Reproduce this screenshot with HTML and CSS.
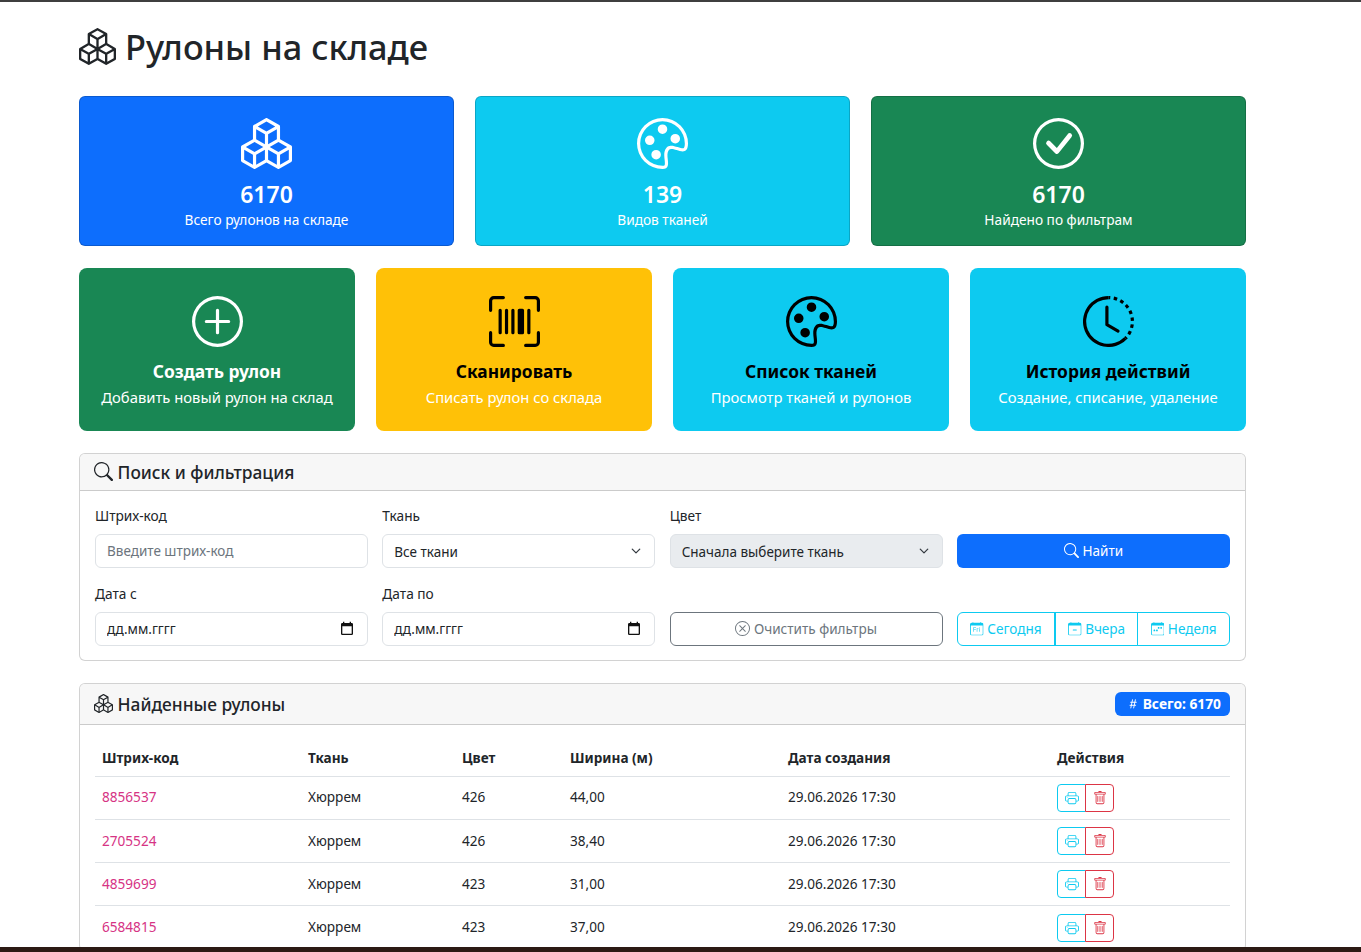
FILE: index.html
```html
<!DOCTYPE html>
<html lang="ru">
<head>
  <meta charset="UTF-8" />
  <meta name="viewport" content="width=device-width, initial-scale=1.0"/>
  <title>Рулоны на складе</title>
  <link rel="stylesheet" href="styles.css">
</head>
<body>
  <!-- icon sprite -->
  <svg class="sprite" xmlns="http://www.w3.org/2000/svg">
    <symbol id="i-boxes" viewBox="0 0 16 16"><path d="M7.752.066a.5.5 0 0 1 .496 0l3.75 2.143a.5.5 0 0 1 .252.434v3.995l3.498 2A.5.5 0 0 1 16 9.07v4.286a.5.5 0 0 1-.252.434l-3.75 2.143a.5.5 0 0 1-.496 0l-3.502-2-3.502 2.001a.5.5 0 0 1-.496 0l-3.75-2.143A.5.5 0 0 1 0 13.357V9.071a.5.5 0 0 1 .252-.434L3.75 6.638V2.643a.5.5 0 0 1 .252-.434L7.752.066ZM4.25 7.504 1.508 9.071l2.742 1.567 2.742-1.567L4.25 7.504ZM7.5 9.933l-2.75 1.571v3.134l2.75-1.571V9.933Zm1 3.134 2.75 1.571v-3.134L8.5 9.933v3.134Zm.508-3.996 2.742 1.567 2.742-1.567-2.742-1.567-2.742 1.567Zm2.242-2.433V3.504L8.5 5.076V8.21l2.75-1.572ZM7.5 8.21V5.076L4.75 3.504v3.134L7.5 8.21ZM5.258 2.643 8 4.21l2.742-1.567L8 1.076 5.258 2.643ZM15 9.933l-2.75 1.571v3.134L15 13.067V9.933ZM3.75 14.638v-3.134L1 9.933v3.134l2.75 1.571Z"/></symbol>
    <symbol id="i-palette" viewBox="0 0 16 16"><path d="M8 5a1.5 1.5 0 1 0 0-3 1.5 1.5 0 0 0 0 3zm4 3a1.5 1.5 0 1 0 0-3 1.5 1.5 0 0 0 0 3zM5.5 7a1.5 1.5 0 1 1-3 0 1.5 1.5 0 0 1 3 0zm.5 6a1.5 1.5 0 1 0 0-3 1.5 1.5 0 0 0 0 3z"/><path d="M16 8c0 3.15-1.866 2.585-3.567 2.07C11.42 9.763 10.465 9.473 10 10c-.603.683-.475 1.819-.351 2.92C9.826 14.495 9.996 16 8 16a8 8 0 1 1 8-8zm-8 7c.611 0 .654-.171.655-.176.078-.146.124-.464.07-1.119-.014-.168-.037-.37-.061-.591-.052-.464-.112-1.005-.118-1.462-.01-.707.083-1.61.704-2.314.369-.417.845-.578 1.272-.618.404-.038.812.026 1.16.104.343.077.702.186 1.025.284l.028.008c.346.105.658.199.953.266.653.148.904.083.991.024C14.717 9.38 15 9.161 15 8a7 7 0 1 0-7 7z"/></symbol>
    <symbol id="i-check" viewBox="0 0 16 16"><path d="M8 15A7 7 0 1 1 8 1a7 7 0 0 1 0 14zm0 1A8 8 0 1 0 8 0a8 8 0 0 0 0 16z"/><path d="M10.97 4.97a.235.235 0 0 0-.02.022L7.477 9.417 5.384 7.323a.75.75 0 0 0-1.06 1.06L6.97 11.03a.75.75 0 0 0 1.079-.02l3.992-4.99a.75.75 0 0 0-1.071-1.05z"/></symbol>
    <symbol id="i-plus" viewBox="0 0 16 16"><path d="M8 15A7 7 0 1 1 8 1a7 7 0 0 1 0 14zm0 1A8 8 0 1 0 8 0a8 8 0 0 0 0 16z"/><path d="M8 4a.5.5 0 0 1 .5.5v3h3a.5.5 0 0 1 0 1h-3v3a.5.5 0 0 1-1 0v-3h-3a.5.5 0 0 1 0-1h3v-3A.5.5 0 0 1 8 4z"/></symbol>
    <symbol id="i-scan" viewBox="0 0 16 16"><path d="M1.5 1a.5.5 0 0 0-.5.5v3a.5.5 0 0 1-1 0v-3A1.5 1.5 0 0 1 1.5 0h3a.5.5 0 0 1 0 1h-3zM11 .5a.5.5 0 0 1 .5-.5h3A1.5 1.5 0 0 1 16 1.5v3a.5.5 0 0 1-1 0v-3a.5.5 0 0 0-.5-.5h-3a.5.5 0 0 1-.5-.5zM.5 11a.5.5 0 0 1 .5.5v3a.5.5 0 0 0 .5.5h3a.5.5 0 0 1 0 1h-3A1.5 1.5 0 0 1 0 14.5v-3a.5.5 0 0 1 .5-.5zm15 0a.5.5 0 0 1 .5.5v3a1.5 1.5 0 0 1-1.5 1.5h-3a.5.5 0 0 1 0-1h3a.5.5 0 0 0 .5-.5v-3a.5.5 0 0 1 .5-.5zM3 4.5a.5.5 0 0 1 1 0v7a.5.5 0 0 1-1 0v-7zm2 0a.5.5 0 0 1 1 0v7a.5.5 0 0 1-1 0v-7zm2 0a.5.5 0 0 1 1 0v7a.5.5 0 0 1-1 0v-7zm2 0a.5.5 0 0 1 .5-.5h1a.5.5 0 0 1 .5.5v7a.5.5 0 0 1-.5.5h-1a.5.5 0 0 1-.5-.5v-7zm3 0a.5.5 0 0 1 1 0v7a.5.5 0 0 1-1 0v-7z"/></symbol>
    <symbol id="i-history" viewBox="0 0 16 16"><path d="M8.515 1.019A7 7 0 0 0 8 1V0a8 8 0 0 1 .589.022l-.074.997zm2.004.45a7.003 7.003 0 0 0-.985-.299l.219-.976c.383.086.76.2 1.126.342l-.36.933zm1.37.71a7.01 7.01 0 0 0-.439-.27l.493-.87a8.025 8.025 0 0 1 .979.654l-.615.789a6.996 6.996 0 0 0-.418-.302zm1.834 1.79a6.99 6.99 0 0 0-.653-.796l.724-.69c.27.285.52.59.747.91l-.818.576zm.744 1.352a7.08 7.08 0 0 0-.214-.468l.893-.45a7.976 7.976 0 0 1 .45 1.088l-.95.313a7.023 7.023 0 0 0-.179-.483zm.53 2.507a6.991 6.991 0 0 0-.1-1.025l.985-.17c.067.386.106.778.116 1.17l-1 .025zm-.131 1.538c.033-.17.06-.339.081-.51l.993.123a7.957 7.957 0 0 1-.23 1.155l-.964-.267c.046-.165.086-.332.12-.501zm-.952 2.379c.184-.29.346-.594.486-.908l.914.405c-.16.36-.345.706-.555 1.038l-.845-.535zm-.964 1.205c.122-.122.239-.248.35-.378l.758.653a8.073 8.073 0 0 1-.401.432l-.707-.707z"/><path d="M8 1a7 7 0 1 0 4.95 11.95l.707.707A8.001 8.001 0 1 1 8 0v1z"/><path d="M7.5 3a.5.5 0 0 1 .5.5v5.21l3.248 1.856a.5.5 0 0 1-.496.868l-3.5-2A.5.5 0 0 1 7 9V3.5a.5.5 0 0 1 .5-.5z"/></symbol>
    <symbol id="i-search" viewBox="0 0 16 16"><path d="M11.742 10.344a6.5 6.5 0 1 0-1.397 1.398h-.001c.03.04.062.078.098.115l3.85 3.85a1 1 0 0 0 1.415-1.414l-3.85-3.85a1.007 1.007 0 0 0-.115-.1zM12 6.5a5.5 5.5 0 1 1-11 0 5.5 5.5 0 0 1 11 0z"/></symbol>
    <symbol id="i-x" viewBox="0 0 16 16"><path d="M8 15A7 7 0 1 1 8 1a7 7 0 0 1 0 14zm0 1A8 8 0 1 0 8 0a8 8 0 0 0 0 16z"/><path d="M4.646 4.646a.5.5 0 0 1 .708 0L8 7.293l2.646-2.647a.5.5 0 0 1 .708.708L8.707 8l2.647 2.646a.5.5 0 0 1-.708.708L8 8.707l-2.646 2.647a.5.5 0 0 1-.708-.708L7.293 8 4.646 5.354a.5.5 0 0 1 0-.708z"/></symbol>
    <symbol id="i-cal-day" viewBox="0 0 16 16"><path d="M4.684 11.523v-2.3h2.261v-.61H4.684V6.801h2.464v-.61H4v5.332h.684zm3.296 0h.676V8.98c0-.554.227-1.007.953-1.007.125 0 .258.004.329.015v-.613a1.806 1.806 0 0 0-.254-.02c-.582 0-.891.32-1.012.567h-.02v-.504H7.98v4.105zm2.805-5.093c0 .238.192.425.43.425a.428.428 0 1 0 0-.855.426.426 0 0 0-.43.43zm.094 5.093h.672V7.418h-.672v4.105z"/><path d="M3.5 0a.5.5 0 0 1 .5.5V1h8V.5a.5.5 0 0 1 1 0V1h1a2 2 0 0 1 2 2v11a2 2 0 0 1-2 2H2a2 2 0 0 1-2-2V3a2 2 0 0 1 2-2h1V.5a.5.5 0 0 1 .5-.5zM1 4v10a1 1 0 0 0 1 1h12a1 1 0 0 0 1-1V4H1z"/></symbol>
    <symbol id="i-cal-minus" viewBox="0 0 16 16"><path d="M5.5 9.5A.5.5 0 0 1 6 9h4a.5.5 0 0 1 0 1H6a.5.5 0 0 1-.5-.5z"/><path d="M3.5 0a.5.5 0 0 1 .5.5V1h8V.5a.5.5 0 0 1 1 0V1h1a2 2 0 0 1 2 2v11a2 2 0 0 1-2 2H2a2 2 0 0 1-2-2V3a2 2 0 0 1 2-2h1V.5a.5.5 0 0 1 .5-.5zM1 4v10a1 1 0 0 0 1 1h12a1 1 0 0 0 1-1V4H1z"/></symbol>
    <symbol id="i-cal-week" viewBox="0 0 16 16"><path d="M11 6.5a.5.5 0 0 1 .5-.5h1a.5.5 0 0 1 .5.5v1a.5.5 0 0 1-.5.5h-1a.5.5 0 0 1-.5-.5v-1zm-3 0a.5.5 0 0 1 .5-.5h1a.5.5 0 0 1 .5.5v1a.5.5 0 0 1-.5.5h-1a.5.5 0 0 1-.5-.5v-1zm-5 3a.5.5 0 0 1 .5-.5h1a.5.5 0 0 1 .5.5v1a.5.5 0 0 1-.5.5h-1a.5.5 0 0 1-.5-.5v-1zm3 0a.5.5 0 0 1 .5-.5h1a.5.5 0 0 1 .5.5v1a.5.5 0 0 1-.5.5h-1a.5.5 0 0 1-.5-.5v-1z"/><path d="M3.5 0a.5.5 0 0 1 .5.5V1h8V.5a.5.5 0 0 1 1 0V1h1a2 2 0 0 1 2 2v11a2 2 0 0 1-2 2H2a2 2 0 0 1-2-2V3a2 2 0 0 1 2-2h1V.5a.5.5 0 0 1 .5-.5zM1 4v10a1 1 0 0 0 1 1h12a1 1 0 0 0 1-1V4H1z"/></symbol>
    <symbol id="i-hash" viewBox="0 0 16 16"><path d="M8.39 12.648a1.32 1.32 0 0 0-.015.18c0 .305.21.508.5.508.266 0 .492-.172.555-.477l.554-2.703h1.204c.421 0 .617-.234.617-.547 0-.312-.188-.53-.617-.53h-.985l.516-2.524h1.265c.43 0 .618-.227.618-.547 0-.313-.188-.524-.618-.524h-1.046l.476-2.304a1.06 1.06 0 0 0 .016-.164.51.51 0 0 0-.516-.516.54.54 0 0 0-.539.43l-.523 2.554H7.617l.477-2.304c.008-.04.015-.118.015-.164a.512.512 0 0 0-.523-.516.539.539 0 0 0-.531.43L6.53 5.484H5.414c-.43 0-.617.22-.617.532 0 .312.187.539.617.539h.906l-.515 2.523H4.609c-.421 0-.609.219-.609.531 0 .313.188.547.61.547h.976l-.516 2.492c-.008.04-.015.125-.015.18 0 .305.21.508.5.508.265 0 .492-.172.554-.477l.555-2.703h2.242l-.515 2.492zm-1-6.109h2.266l-.515 2.563H6.859l.532-2.563z"/></symbol>
    <symbol id="i-printer" viewBox="0 0 16 16"><path d="M2.5 8a.5.5 0 1 0 0-1 .5.5 0 0 0 0 1z"/><path d="M5 1a2 2 0 0 0-2 2v2H2a2 2 0 0 0-2 2v3a2 2 0 0 0 2 2h1v1a2 2 0 0 0 2 2h6a2 2 0 0 0 2-2v-1h1a2 2 0 0 0 2-2V7a2 2 0 0 0-2-2h-1V3a2 2 0 0 0-2-2H5zM4 3a1 1 0 0 1 1-1h6a1 1 0 0 1 1 1v2H4V3zm1 5a2 2 0 0 0-2 2v1H2a1 1 0 0 1-1-1V7a1 1 0 0 1 1-1h12a1 1 0 0 1 1 1v3a1 1 0 0 1-1 1h-1v-1a2 2 0 0 0-2-2H5zm7 2v3a1 1 0 0 1-1 1H5a1 1 0 0 1-1-1v-3a1 1 0 0 1 1-1h6a1 1 0 0 1 1 1z"/></symbol>
    <symbol id="i-trash" viewBox="0 0 16 16"><path d="M5.5 5.5A.5.5 0 0 1 6 6v6a.5.5 0 0 1-1 0V6a.5.5 0 0 1 .5-.5zm2.5 0a.5.5 0 0 1 .5.5v6a.5.5 0 0 1-1 0V6a.5.5 0 0 1 .5-.5zm3 .5a.5.5 0 0 0-1 0v6a.5.5 0 0 0 1 0V6z"/><path fill-rule="evenodd" d="M14.5 3a1 1 0 0 1-1 1H13v9a2 2 0 0 1-2 2H5a2 2 0 0 1-2-2V4h-.5a1 1 0 0 1-1-1V2a1 1 0 0 1 1-1H6a1 1 0 0 1 1-1h2a1 1 0 0 1 1 1h3.5a1 1 0 0 1 1 1v1zM4.118 4 4 4.059V13a1 1 0 0 0 1 1h6a1 1 0 0 0 1-1V4.059L11.882 4H4.118zM2.5 3V2h11v1h-11z"/></symbol>
  </svg>

  <div class="top-strip"></div>

  <main class="page">
    <h1 class="page-title"><svg class="icon"><use href="#i-boxes"/></svg> Рулоны на складе</h1>

    <section class="stats">
      <div class="stat-card bg-blue">
        <svg class="icon big-icon"><use href="#i-boxes"/></svg>
        <div class="stat-value">6170</div>
        <div class="stat-label">Всего рулонов на складе</div>
      </div>
      <div class="stat-card bg-cyan">
        <svg class="icon big-icon"><use href="#i-palette"/></svg>
        <div class="stat-value">139</div>
        <div class="stat-label">Видов тканей</div>
      </div>
      <div class="stat-card bg-green">
        <svg class="icon big-icon"><use href="#i-check"/></svg>
        <div class="stat-value">6170</div>
        <div class="stat-label">Найдено по фильтрам</div>
      </div>
    </section>

    <section class="actions">
      <a class="action-card bg-green" href="#">
        <svg class="icon big-icon"><use href="#i-plus"/></svg>
        <div class="action-title">Создать рулон</div>
        <div class="action-sub">Добавить новый рулон на склад</div>
      </a>
      <a class="action-card bg-yellow dark" href="#">
        <svg class="icon big-icon"><use href="#i-scan"/></svg>
        <div class="action-title">Сканировать</div>
        <div class="action-sub">Списать рулон со склада</div>
      </a>
      <a class="action-card bg-cyan dark" href="#">
        <svg class="icon big-icon"><use href="#i-palette"/></svg>
        <div class="action-title">Список тканей</div>
        <div class="action-sub">Просмотр тканей и рулонов</div>
      </a>
      <a class="action-card bg-cyan dark" href="#">
        <svg class="icon big-icon"><use href="#i-history"/></svg>
        <div class="action-title">История действий</div>
        <div class="action-sub">Создание, списание, удаление</div>
      </a>
    </section>

    <section class="card">
      <div class="card-header">
        <h2 class="card-title"><svg class="icon"><use href="#i-search"/></svg> Поиск и фильтрация</h2>
      </div>
      <div class="filter-grid">
        <div class="field">
          <label for="barcode">Штрих-код</label>
          <input id="barcode" class="control" type="text" placeholder="Введите штрих-код">
        </div>
        <div class="field">
          <label for="fabric">Ткань</label>
          <select id="fabric" class="control select"><option>Все ткани</option></select>
        </div>
        <div class="field">
          <label for="color">Цвет</label>
          <select id="color" class="control select" disabled><option>Сначала выберите ткань</option></select>
        </div>
        <button class="btn btn-primary"><svg class="icon"><use href="#i-search"/></svg> Найти</button>

        <div class="field">
          <label for="dateFrom">Дата с</label>
          <input id="dateFrom" class="control date" type="text" value="дд.мм.гггг">
        </div>
        <div class="field">
          <label for="dateTo">Дата по</label>
          <input id="dateTo" class="control date" type="text" value="дд.мм.гггг">
        </div>
        <button class="btn btn-outline-secondary"><svg class="icon"><use href="#i-x"/></svg> Очистить фильтры</button>
        <div class="btn-group">
          <button class="btn-info"><svg class="icon"><use href="#i-cal-day"/></svg> Сегодня</button>
          <button class="btn-info"><svg class="icon"><use href="#i-cal-minus"/></svg> Вчера</button>
          <button class="btn-info"><svg class="icon"><use href="#i-cal-week"/></svg> Неделя</button>
        </div>
      </div>
    </section>

    <section class="card">
      <div class="card-header results-header">
        <h2 class="card-title"><svg class="icon"><use href="#i-boxes"/></svg> Найденные рулоны</h2>
        <span class="badge"><svg class="icon"><use href="#i-hash"/></svg> Всего: 6170</span>
      </div>
      <div class="table-wrap">
        <table class="rolls">
          <thead>
            <tr><th>Штрих-код</th><th>Ткань</th><th>Цвет</th><th>Ширина (м)</th><th>Дата создания</th><th>Действия</th></tr>
          </thead>
          <tbody>
            <tr>
              <td class="code">8856537</td><td>Хюррем</td><td>426</td><td>44,00</td><td>29.06.2026 17:30</td>
              <td><div class="row-btns"><button class="mini mini-info"><svg class="icon"><use href="#i-printer"/></svg></button><button class="mini mini-danger"><svg class="icon"><use href="#i-trash"/></svg></button></div></td>
            </tr>
            <tr>
              <td class="code">2705524</td><td>Хюррем</td><td>426</td><td>38,40</td><td>29.06.2026 17:30</td>
              <td><div class="row-btns"><button class="mini mini-info"><svg class="icon"><use href="#i-printer"/></svg></button><button class="mini mini-danger"><svg class="icon"><use href="#i-trash"/></svg></button></div></td>
            </tr>
            <tr>
              <td class="code">4859699</td><td>Хюррем</td><td>423</td><td>31,00</td><td>29.06.2026 17:30</td>
              <td><div class="row-btns"><button class="mini mini-info"><svg class="icon"><use href="#i-printer"/></svg></button><button class="mini mini-danger"><svg class="icon"><use href="#i-trash"/></svg></button></div></td>
            </tr>
            <tr>
              <td class="code">6584815</td><td>Хюррем</td><td>423</td><td>37,00</td><td>29.06.2026 17:30</td>
              <td><div class="row-btns"><button class="mini mini-info"><svg class="icon"><use href="#i-printer"/></svg></button><button class="mini mini-danger"><svg class="icon"><use href="#i-trash"/></svg></button></div></td>
            </tr>
          </tbody>
        </table>
      </div>
    </section>
  </main>

  <div class="bottom-strip"></div>
</body>
</html>
```

FILE: styles.css
```css
* {
  box-sizing: border-box;
}

html, body {
  height: 100%;
}

body {
  margin: 0;
  display: flex;
  flex-direction: column;
  overflow: hidden;
  font-family: "Noto Sans", sans-serif;
  font-size: 14px;
  line-height: 1.5;
  color: #212529;
  background-color: #fff;
}

.sprite {
  display: none;
}

.icon {
  width: 1em;
  height: 1em;
  fill: currentColor;
  vertical-align: -0.125em;
}

.top-strip {
  flex: none;
  height: 2px;
  background-color: #3f3f3f;
}

.bottom-strip {
  flex: none;
  height: 5px;
  background-color: #2c1a14;
}

.page {
  flex: 1;
  min-height: 0;
  overflow: hidden;
  width: 1167px;
  margin-left: 79px;
}

.page-title {
  margin: 18px 0 23px;
  font-size: 34.4px;
  font-weight: 500;
  line-height: 53px;
}

.page-title .icon {
  font-size: 37px;
}

/* colours */
.bg-blue { background-color: #0d6efd; }
.bg-cyan { background-color: #0dcaf0; }
.bg-green { background-color: #198754; }
.bg-yellow { background-color: #ffc107; }

/* stat cards */
.stats {
  display: grid;
  grid-template-columns: repeat(3, 1fr);
  gap: 21px;
  margin-bottom: 22px;
}

.stat-card {
  height: 150px;
  padding-top: 21px;
  border: 1px solid rgba(0,0,0,0.175);
  border-radius: 6px;
  color: white;
  text-align: center;
}

.big-icon {
  display: block;
  width: 51px;
  height: 51px;
  margin: 0 auto;
}

.stat-value {
  margin-top: 9px;
  font-size: 23px;
  font-weight: 600;
  line-height: 33px;
}

.stat-label {
  font-size: 13.7px;
  line-height: 17px;
}

/* action cards */
.actions {
  display: grid;
  grid-template-columns: repeat(4, 1fr);
  gap: 21px;
  margin-bottom: 22px;
}

.action-card {
  display: block;
  height: 163px;
  padding-top: 28px;
  border-radius: 8px;
  color: white;
  text-align: center;
  text-decoration: none;
}

.action-card.dark .big-icon,
.action-card.dark .action-title {
  color: black;
}

.action-title {
  margin-top: 12px;
  font-size: 17.4px;
  font-weight: 700;
  line-height: 25px;
}

.action-sub {
  font-size: 14.8px;
  line-height: 26px;
}

/* cards */
.card {
  margin-bottom: 22px;
  border: 1px solid rgba(0,0,0,0.175);
  border-radius: 6px;
  background: white;
}

.card-header {
  height: 37px;
  padding: 0 15px 0 14px;
  display: flex;
  align-items: center;
  border-bottom: 1px solid rgba(0,0,0,0.175);
  border-radius: 5px 5px 0 0;
  background-color: #f7f7f7;
}

.card-title {
  margin: 0;
  font-size: 17.35px;
  font-weight: 500;
  line-height: 1.2;
}

.card-title .icon {
  font-size: 19px;
}

/* filters */
.filter-grid {
  display: grid;
  grid-template-columns: repeat(4, 273px);
  justify-content: space-between;
  align-items: end;
  row-gap: 16px;
  padding: 15px 15px 14px;
}

.field label {
  display: block;
  margin-bottom: 8px;
  font-size: 13.7px;
  line-height: 20px;
}

.control {
  display: block;
  width: 100%;
  height: 34px;
  padding: 0 11px;
  border: 1px solid #dee2e6;
  border-radius: 6px;
  background-color: white;
  color: #212529;
  font: inherit;
  font-size: 13.5px;
}

.control::placeholder {
  color: #6c757d;
}

.select {
  appearance: none;
  padding-top: 2px;
  background-image: url("data:image/svg+xml,%3csvg xmlns='http://www.w3.org/2000/svg' viewBox='0 0 16 16'%3e%3cpath fill='none' stroke='%23343a40' stroke-linecap='round' stroke-linejoin='round' stroke-width='2' d='m2 5 6 6 6-6'/%3e%3c/svg%3e");
  background-repeat: no-repeat;
  background-position: right 12px center;
  background-size: 12px 10px;
}

.select:disabled {
  background-color: #e9ecef;
  opacity: 1;
}

.date {
  background-image: url("data:image/svg+xml,%3csvg xmlns='http://www.w3.org/2000/svg' viewBox='0 0 24 24'%3e%3cpath fill='%23111' d='M19 3h-1V1h-2v2H8V1H6v2H5a2 2 0 0 0-2 2v14a2 2 0 0 0 2 2h14a2 2 0 0 0 2-2V5a2 2 0 0 0-2-2zm0 16H5V8h14v11z'/%3e%3c/svg%3e");
  background-repeat: no-repeat;
  background-position: right 12px center;
  background-size: 16px 16px;
}

.btn {
  height: 34px;
  border-radius: 6px;
  font: inherit;
  font-size: 13.55px;
  cursor: pointer;
}

.btn .icon {
  font-size: 15px;
}

.btn-primary {
  border: none;
  background-color: #0d6efd;
  color: white;
}

.btn-outline-secondary {
  border: 1px solid #6c757d;
  background: white;
  color: #6c757d;
}

.btn-group {
  display: flex;
  height: 34px;
}

.btn-info {
  flex: auto;
  padding: 0;
  margin-left: -1px;
  border: 1px solid #0dcaf0;
  background: white;
  color: #0dcaf0;
  font: inherit;
  font-size: 13.55px;
}

.btn-info:first-child {
  margin-left: 0;
  border-radius: 6px 0 0 6px;
}

.btn-info:nth-child(2) {
  border-left-width: 2px;
}

.btn-info:last-child {
  border-radius: 0 6px 6px 0;
}

/* results */
.results-header {
  height: 41px;
  justify-content: space-between;
}

.badge {
  height: 24px;
  padding: 0 9px 0 11px;
  display: flex;
  align-items: center;
  gap: 3px;
  border-radius: 6px;
  background-color: #0d6efd;
  color: white;
  font-size: 13.8px;
  font-weight: 700;
}

.table-wrap {
  padding: 15px 15px 0;
}

.rolls {
  width: 100%;
  border-collapse: collapse;
  table-layout: fixed;
  font-size: 13.6px;
}

.rolls th {
  height: 36px;
  padding: 0 7px;
  border-bottom: 1px solid #dee2e6;
  font-weight: 700;
  text-align: left;
}

.rolls th:nth-child(1) { width: 206px; }
.rolls th:nth-child(2) { width: 154px; }
.rolls th:nth-child(3) { width: 108px; }
.rolls th:nth-child(4) { width: 218px; }
.rolls th:nth-child(5) { width: 269px; }

.rolls td {
  height: 43.33px;
  padding: 0 7px;
  border-bottom: 1px solid #dee2e6;
}

.code {
  color: #d63384;
}

.row-btns {
  display: flex;
}

.mini {
  width: 29px;
  height: 28px;
  padding: 0;
  display: flex;
  align-items: center;
  justify-content: center;
  background: white;
  font-size: 14px;
}

.mini-info {
  border: 1px solid #0dcaf0;
  border-radius: 4px 0 0 4px;
  color: #0dcaf0;
}

.mini-danger {
  margin-left: -1px;
  border: 1px solid #dc3545;
  border-radius: 0 4px 4px 0;
  color: #dc3545;
}
```
